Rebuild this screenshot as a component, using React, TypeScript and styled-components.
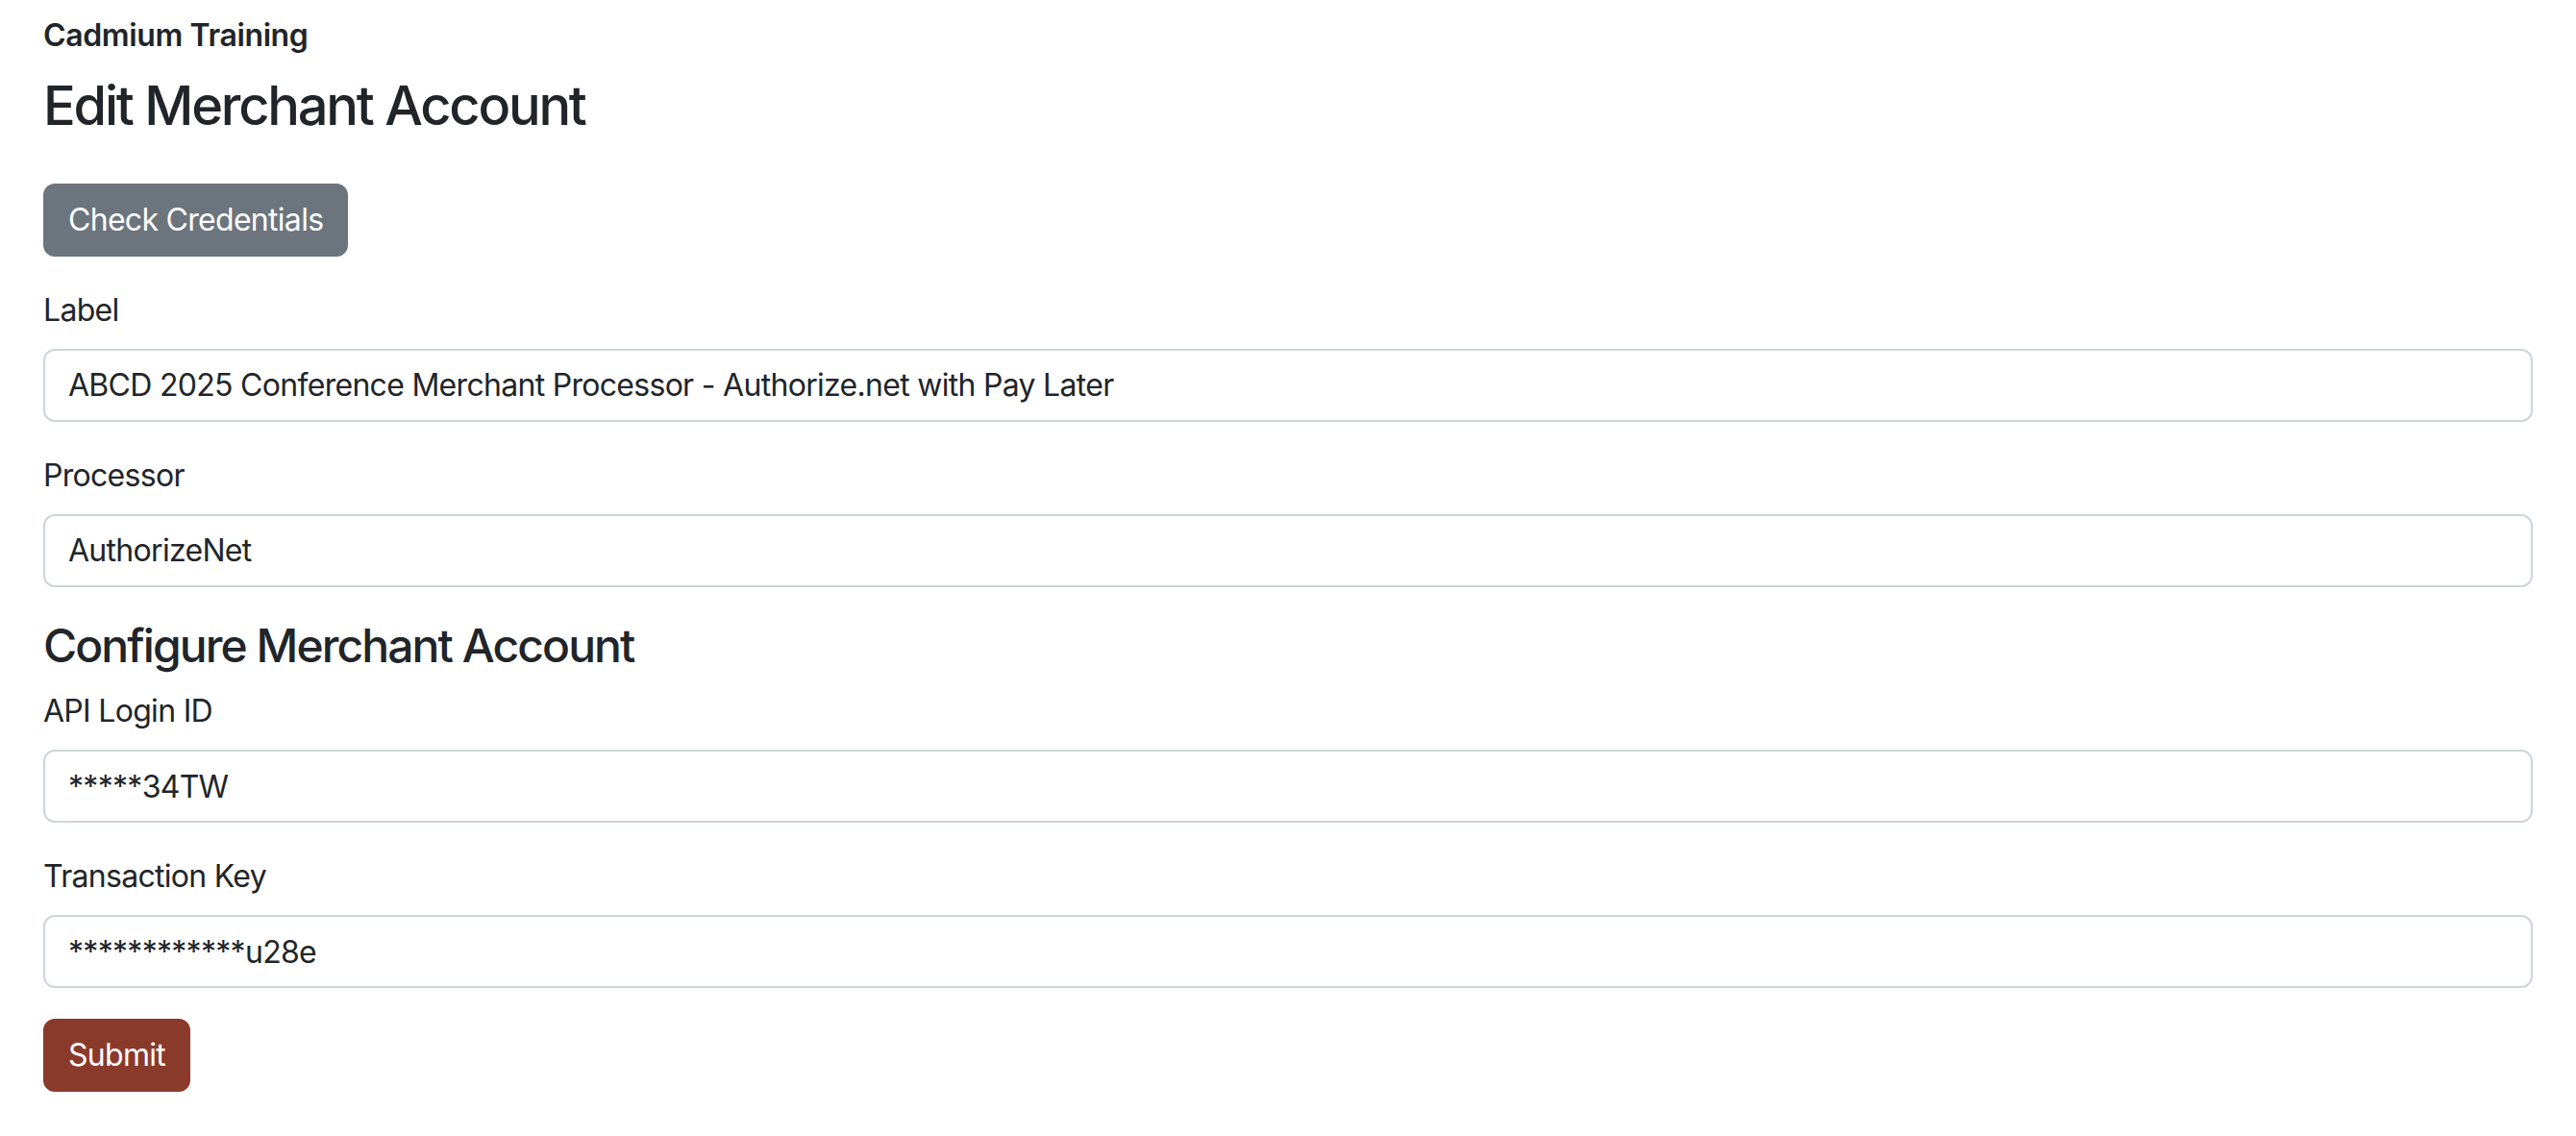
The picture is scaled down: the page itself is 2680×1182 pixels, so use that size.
import styled, { createGlobalStyle } from 'styled-components';

const GlobalStyle = createGlobalStyle`
  * {
    box-sizing: border-box;
  }

  body {
    margin: 0;
    background: #ffffff;
    color: #212529;
    font-family: Inter, "Noto Sans", "Liberation Sans", sans-serif;
    font-size: 32px;
    line-height: 1.5;
    letter-spacing: -0.022em;
  }
`;

const Page = styled.main`
  padding: 18px 45px 32px;
`;

const OrgName = styled.h6`
  margin: 0 0 21px;
  font-size: 32px;
  font-weight: 600;
  line-height: 1.2;
  letter-spacing: -0.012em;
`;

const Title = styled.h3`
  margin: 0 0 46px;
  font-size: 56px;
  font-weight: 500;
  line-height: 1.2;
  letter-spacing: -0.04em;
`;

const SectionTitle = styled.h4`
  margin: 0 0 16px;
  font-size: 48px;
  font-weight: 500;
  line-height: 1.2;
  letter-spacing: -0.04em;
`;

const Button = styled.button<{ $variant: 'secondary' | 'primary' }>`
  display: inline-block;
  height: 76px;
  padding: 0 24px;
  border: 2px solid ${(p) => (p.$variant === 'secondary' ? '#6c757d' : '#8a3a2a')};
  border-radius: 12px;
  background-color: ${(p) => (p.$variant === 'secondary' ? '#6c757d' : '#8a3a2a')};
  color: #ffffff;
  font-family: inherit;
  font-size: 32px;
  line-height: 1.5;
  letter-spacing: inherit;
  cursor: pointer;
`;

const Toolbar = styled.div`
  margin-bottom: 32px;
`;

const Form = styled.form`
  display: flex;
  flex-direction: column;
`;

const Field = styled.div`
  margin-bottom: 32px;
`;

const Label = styled.label`
  display: block;
  margin-bottom: 16px;
  font-size: 32px;
  line-height: 48px;
`;

const Input = styled.input`
  display: block;
  width: 100%;
  height: 76px;
  padding: 12px 24px;
  border: 2px solid #ced4da;
  border-radius: 12px;
  background: #ffffff;
  color: #212529;
  font-family: inherit;
  font-size: 32px;
  line-height: 1.5;
  letter-spacing: inherit;

  &:focus {
    outline: none;
    border-color: #86b7fe;
  }
`;

const fields = [
  { id: 'label', label: 'Label', value: 'ABCD 2025 Conference Merchant Processor - Authorize.net with Pay Later' },
  { id: 'processor', label: 'Processor', value: 'AuthorizeNet' },
];

const credentials = [
  { id: 'apiLoginId', label: 'API Login ID', value: '*****34TW' },
  { id: 'transactionKey', label: 'Transaction Key', value: '************u28e' },
];

export default function App() {
  return (
    <>
      <GlobalStyle />
      <Page>
        <OrgName>Cadmium Training</OrgName>
        <Title>Edit Merchant Account</Title>
        <Toolbar>
          <Button type="button" $variant="secondary">Check Credentials</Button>
        </Toolbar>
        <Form onSubmit={(e) => e.preventDefault()}>
          {fields.map((f) => (
            <Field key={f.id}>
              <Label htmlFor={f.id}>{f.label}</Label>
              <Input id={f.id} defaultValue={f.value} readOnly={f.id === 'processor'} />
            </Field>
          ))}
          <SectionTitle>Configure Merchant Account</SectionTitle>
          {credentials.map((f) => (
            <Field key={f.id}>
              <Label htmlFor={f.id}>{f.label}</Label>
              <Input id={f.id} defaultValue={f.value} />
            </Field>
          ))}
          <div>
            <Button type="submit" $variant="primary">Submit</Button>
          </div>
        </Form>
      </Page>
    </>
  );
}
